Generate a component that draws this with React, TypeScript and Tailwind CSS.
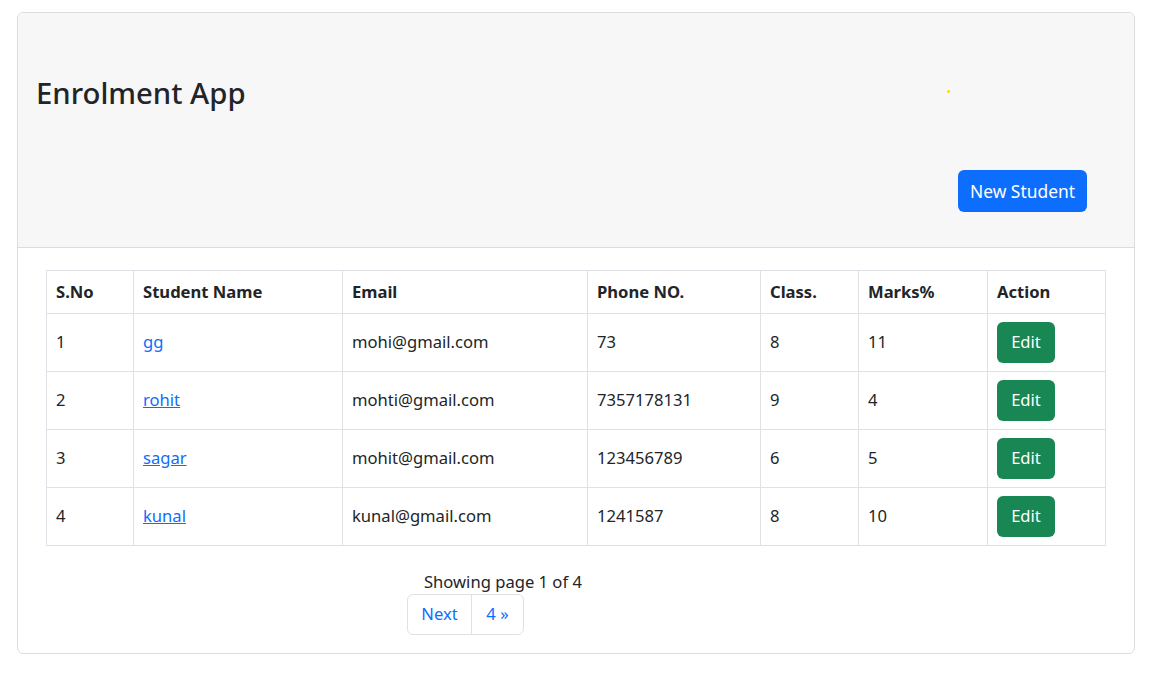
const students = [
  { id: 1, name: "gg", email: "mohi@gmail.com", phone: "73", cls: "8", marks: "11", underline: false },
  { id: 2, name: "rohit", email: "mohti@gmail.com", phone: "7357178131", cls: "9", marks: "4", underline: true },
  { id: 3, name: "sagar", email: "mohit@gmail.com", phone: "123456789", cls: "6", marks: "5", underline: true },
  { id: 4, name: "kunal", email: "kunal@gmail.com", phone: "1241587", cls: "8", marks: "10", underline: true },
];

const cols = ["w-[87px]", "w-[209px]", "w-[245px]", "w-[173px]", "w-[98px]", "w-[129px]", "w-[118px]"];

const App = () => {
  return (
    <div className="min-h-[692px] bg-white pt-3 px-[17px] text-[#212529] font-['Noto_Sans','Open_Sans',sans-serif] text-[16.6px]">
      <div className="w-[1118px] rounded-md border border-[#dcdcdc] overflow-hidden">
        {/* Header */}
        <div className="relative h-[235px] bg-[#f7f7f7] border-b border-[#dcdcdc] px-[18px]">
          <h2 className="pt-[61px] text-[29.3px] leading-[38px] font-medium">Enrolment App</h2>
          <span className="absolute left-[929px] top-[77px] w-[3px] h-[3px] rounded-full bg-[#ffd800]" />
          <div className="flex justify-end pr-[29px] mt-[58px]">
            <button className="h-[42px] w-[129px] rounded-md bg-[#0d6efd] text-white text-[17.4px]">
              New Student
            </button>
          </div>
        </div>

        {/* Body */}
        <div className="px-[28px] pt-[22px] pb-[18px]">
          <table className="w-[1059px] border-collapse table-fixed">
            <thead>
              <tr className="h-[43px]">
                {["S.No", "Student Name", "Email", "Phone NO.", "Class.", "Marks%", "Action"].map((h, i) => (
                  <th key={h} className={`${cols[i]} border border-[#dee2e6] px-[9px] text-left font-bold`}>
                    {h}
                  </th>
                ))}
              </tr>
            </thead>
            <tbody>
              {students.map((s) => (
                <tr key={s.id} className="h-[58px]">
                  <td className="border border-[#dee2e6] px-[9px]">{s.id}</td>
                  <td className="border border-[#dee2e6] px-[9px]">
                    <a href="#" className={`text-[#0d6efd] ${s.underline ? "underline" : ""}`}>{s.name}</a>
                  </td>
                  <td className="border border-[#dee2e6] px-[9px]">{s.email}</td>
                  <td className="border border-[#dee2e6] px-[9px]">{s.phone}</td>
                  <td className="border border-[#dee2e6] px-[9px]">{s.cls}</td>
                  <td className="border border-[#dee2e6] px-[9px]">{s.marks}</td>
                  <td className="border border-[#dee2e6] px-[9px]">
                    <button className="h-[41px] w-[58px] rounded-md bg-[#198754] text-white">Edit</button>
                  </td>
                </tr>
              ))}
            </tbody>
          </table>

          {/* Pagination */}
          <div className="pl-[361px] pt-[24px]">
            <p className="pl-[17px] leading-[24px]">Showing page 1 of 4</p>
            <div className="flex w-fit h-[41px] border border-[#dee2e6] rounded-md text-[#0d6efd]">
              <a href="#" className="w-[64px] flex items-center justify-center border-r border-[#dee2e6]">Next</a>
              <a href="#" className="w-[51px] flex items-center justify-center">4 »</a>
            </div>
          </div>
        </div>
      </div>
    </div>
  );
};

export default App;
